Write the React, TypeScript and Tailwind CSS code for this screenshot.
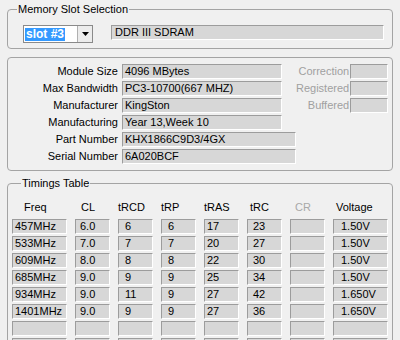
import React from "react";

const field =
  "h-[15px] leading-[13px] border border-t-[#9c9c9c] border-l-[#9c9c9c] border-b-white border-r-white bg-[#d7d7d7] whitespace-nowrap overflow-hidden";

const infoRows = [
  { label: "Module Size", value: "4096 MBytes", wide: false },
  { label: "Max Bandwidth", value: "PC3-10700(667 MHZ)", wide: false },
  { label: "Manufacturer", value: "KingSton", wide: false },
  { label: "Manufacturing", value: "Year 13,Week 10", wide: false },
  { label: "Part Number", value: "KHX1866C9D3/4GX", wide: true },
  { label: "Serial Number", value: "6A020BCF", wide: true },
];

const headers = [
  { name: "Freq", cls: "pl-[12px]" },
  { name: "CL", cls: "pl-[6px]" },
  { name: "tRCD", cls: "pl-0" },
  { name: "tRP", cls: "pl-0" },
  { name: "tRAS", cls: "pl-0" },
  { name: "tRC", cls: "pl-[3px]" },
  { name: "CR", cls: "pl-[5px] text-[#a8a8a8]" },
  { name: "Voltage", cls: "pl-[3px]" },
];

const cellPad = [
  "pl-[2px]",
  "pl-[4px]",
  "pl-[6px]",
  "pl-[6px]",
  "pl-[2px]",
  "pl-[5px]",
  "pl-[2px]",
  "pl-[7px]",
];

const timings = [
  ["457MHz", "6.0", "6", "6", "17", "23", "", "1.50V"],
  ["533MHz", "7.0", "7", "7", "20", "27", "", "1.50V"],
  ["609MHz", "8.0", "8", "8", "22", "30", "", "1.50V"],
  ["685MHz", "9.0", "9", "9", "25", "34", "", "1.50V"],
  ["934MHz", "9.0", "11", "9", "27", "42", "", "1.650V"],
  ["1401MHz", "9.0", "9", "9", "27", "36", "", "1.650V"],
  ["", "", "", "", "", "", "", ""],
  ["", "", "", "", "", "", "", ""],
];

const App = () => {
  return (
    <div
      className="w-[400px] h-[340px] overflow-hidden bg-[#f0f0f0] px-[7px] text-[11px] text-black"
      style={{ fontFamily: '"Liberation Sans", Arial, sans-serif' }}
    >
      {/* slot selection */}
      <fieldset className="mt-[2px] border border-[#a4a4a4] rounded-[4px] pt-[9px] pb-[5px] px-0">
        <legend className="ml-[9px] px-[1px] leading-[14px]">Memory Slot Selection</legend>
        <div className="flex items-start">
          <div className="ml-[15px] flex h-[18px] w-[70px] items-center border border-[#8a8a8a] bg-white pl-[1px]">
            <span className="bg-[#3399ff] text-white font-bold text-[12px] leading-[13px] h-[13px] px-[1px]">
              slot #3
            </span>
            <div className="ml-auto flex h-[16px] w-[15px] items-center justify-center border-l border-[#b0b0b0] bg-[#ececec]">
              <svg width="7" height="4" viewBox="0 0 7 4">
                <polygon points="0,0 7,0 3.5,4" fill="#000" />
              </svg>
            </div>
          </div>
          <div className={`${field} ml-[18px] w-[273px] pl-[3px]`}>DDR III SDRAM</div>
        </div>
      </fieldset>

      {/* module info */}
      <div className="mt-[8px] border border-[#a4a4a4] rounded-[4px] pt-[6px] pb-[6px] flex">
        <div className="w-[288px] flex flex-col gap-[2px]">
          {infoRows.map((r) => (
            <div key={r.label} className="flex items-center h-[15px] gap-[4px]">
              <div className="w-[110px] text-right leading-[13px] whitespace-nowrap">{r.label}</div>
              <div className={`${field} pl-[2px] ${r.wide ? "w-[174px]" : "w-[160px]"}`}>{r.value}</div>
            </div>
          ))}
        </div>
        <div className="flex-1 pr-[5px] flex flex-col gap-[2px]">
          {["Correction", "Registered", "Buffered"].map((l) => (
            <div key={l} className="flex items-center h-[15px] gap-[1px]">
              <div className="flex-1 text-right text-[#a0a0a0] leading-[13px]">{l}</div>
              <div className={`${field} w-[38px]`} />
            </div>
          ))}
        </div>
      </div>

      {/* timings */}
      <fieldset className="mt-[5px] border border-[#a4a4a4] rounded-[4px] pt-[10px] pl-[4px] pb-[4px]">
        <legend className="ml-[9px] px-[1px] leading-[14px]">Timings Table</legend>
        <div className="grid grid-cols-[55px_repeat(6,35px)_55px] gap-x-[8px] h-[14px] leading-[14px] mb-[5px]">
          {headers.map((h) => (
            <div key={h.name} className={h.cls}>
              {h.name}
            </div>
          ))}
        </div>
        <div className="grid grid-cols-[55px_repeat(6,35px)_55px] gap-x-[8px] gap-y-[2px]">
          {timings.map((row, i) =>
            row.map((v, j) => (
              <div key={`${i}-${j}`} className={`${field} ${cellPad[j]}`}>
                {v}
              </div>
            ))
          )}
        </div>
      </fieldset>
    </div>
  );
};

export default App;
